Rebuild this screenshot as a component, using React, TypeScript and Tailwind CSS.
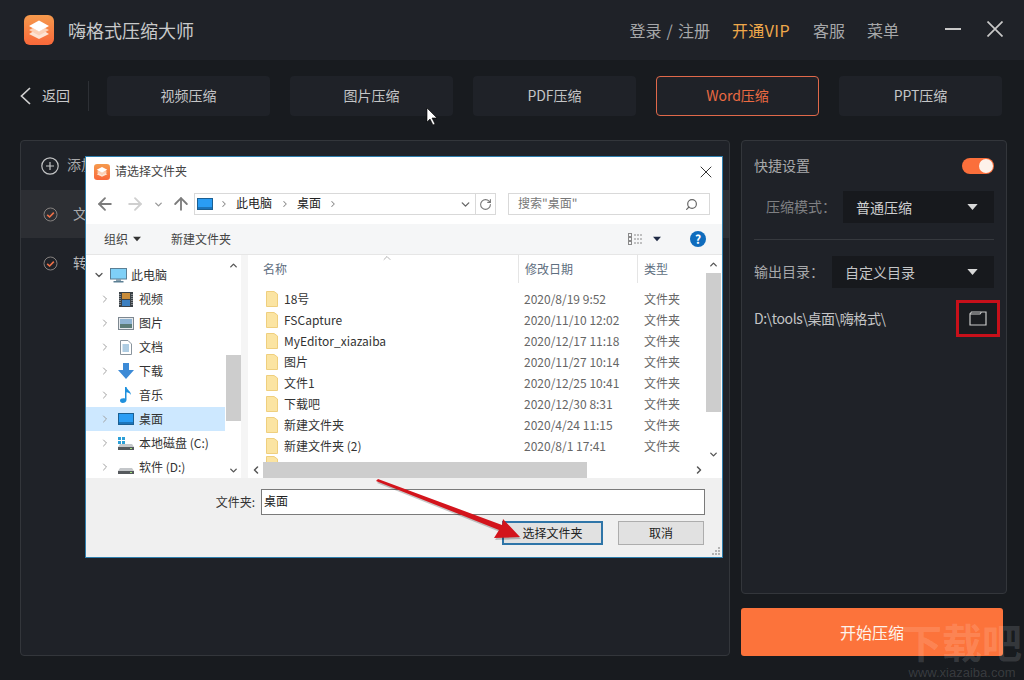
import { ChevronDown, ChevronLeft, ChevronRight, ChevronUp, ArrowLeft, ArrowRight, ArrowUp, RotateCw, Search, X } from "lucide-react";

// App logo: orange tile with stacked white layers
function Logo({ size }: { size: number }) {
  return (
    <svg width={size} height={size} viewBox="0 0 30 30">
      <defs>
        <linearGradient id={`lg${size}`} x1="0" y1="0" x2="0" y2="1">
          <stop offset="0" stopColor="#f59a4d" />
          <stop offset="1" stopColor="#f9683a" />
        </linearGradient>
      </defs>
      <rect width="30" height="30" rx="6" fill={`url(#lg${size})`} />
      <path d="M15 24 L25 19 L21 16.5 L15 19.5 L9 16.5 L5 19 Z" fill="#fde3d3" />
      <path d="M15 20.5 L25 15 L21 13 L15 16 L9 13 L5 15 Z" fill="#fcd0b5" />
      <path d="M15 5.5 L25 11 L15 16.5 L5 11 Z" fill="#ffffff" />
    </svg>
  );
}

function CheckCircle() {
  return (
    <svg width="15" height="15" viewBox="0 0 15 15" fill="none">
      <circle cx="7.5" cy="7.5" r="6.5" stroke="#85817f" strokeWidth="1" />
      <path d="M4.2 7.8 L6.6 10 L10.8 5.6" stroke="#ee7148" strokeWidth="1.6" />
    </svg>
  );
}

function Caret({ className }: { className: string }) {
  return (
    <svg width="11" height="6" viewBox="0 0 12 7" className={className}>
      <path d="M0 0 H12 L6 7 Z" fill="currentColor" />
    </svg>
  );
}

function Folder() {
  return (
    <svg width="12" height="16" viewBox="0 0 12 16" className="shrink-0">
      <path d="M0.5 0.5 H8 L11.5 3 V15.5 H0.5 Z" fill="#fbe4a2" stroke="#efcf7e" />
    </svg>
  );
}

function PcIcon() {
  return (
    <svg width="17" height="15" viewBox="0 0 17 15">
      <rect x="0.5" y="0.5" width="16" height="10.5" fill="#7fd0f7" stroke="#5b7f94" />
      <rect x="6" y="11" width="5" height="2" fill="#8aa0ad" />
      <rect x="3.5" y="13" width="10" height="1.5" fill="#5b7f94" />
    </svg>
  );
}

function DesktopIcon({ w = 16, h = 12 }: { w?: number; h?: number }) {
  return (
    <svg width={w} height={h} viewBox="0 0 16 12">
      <rect x="0.5" y="0.5" width="15" height="11" fill="#2a9df4" stroke="#1b5f92" />
      <path d="M1 10 H15" stroke="#0f4d80" />
    </svg>
  );
}

function NavIcon({ kind }: { kind: string }) {
  if (kind === "film")
    return (
      <svg width="14" height="15" viewBox="0 0 14 15">
        <rect width="14" height="15" fill="#3b4146" />
        <rect x="3" y="1" width="8" height="6" fill="#c98c3a" />
        <rect x="3" y="8" width="8" height="6" fill="#3c7fc0" />
        <path d="M1 2 V13 M13 2 V13" stroke="#c8ccd0" strokeWidth="1" strokeDasharray="1 1" />
      </svg>
    );
  if (kind === "pic")
    return (
      <svg width="16" height="13" viewBox="0 0 16 13">
        <rect x="0.5" y="0.5" width="15" height="12" fill="#e6e9ec" stroke="#7d8790" />
        <rect x="2" y="2" width="12" height="5" fill="#8fb4d3" />
        <rect x="2" y="7" width="12" height="4" fill="#5c7d78" />
      </svg>
    );
  if (kind === "doc")
    return (
      <svg width="12" height="15" viewBox="0 0 12 15" fill="none">
        <path d="M0.5 0.5 H8 L11.5 4 V14.5 H0.5 Z" fill="#fff" stroke="#8a959e" />
        <path d="M2.5 5 H9 M2.5 7 H9 M2.5 9 H9 M2.5 11 H9" stroke="#5f9ac6" />
      </svg>
    );
  if (kind === "down")
    return (
      <svg width="16" height="16" viewBox="0 0 16 16">
        <path d="M5 0 H11 V7 H16 L8 16 L0 7 H5 Z" fill="#3c8ad6" />
      </svg>
    );
  if (kind === "music")
    return (
      <svg width="12" height="16" viewBox="0 0 12 16">
        <path d="M5 0 H6.5 C7 3 11 4 11 8 C10 6 8 5.5 6.5 5.2 V13 C6.5 15 4.5 16 2.8 16 C1 16 0 15 0 13.6 C0 12 2 11 5 11.5 Z" fill="#1e90dd" />
      </svg>
    );
  if (kind === "desk") return <DesktopIcon />;
  return (
    <svg width="16" height="13" viewBox="0 0 16 13">
      {kind === "c" && (
        <g fill="#2b9fd8">
          <rect x="0" y="0" width="3" height="3" />
          <rect x="4" y="0" width="3" height="3" />
          <rect x="0" y="4" width="3" height="3" />
          <rect x="4" y="4" width="3" height="3" />
        </g>
      )}
      <path d="M2 7 H14 L16 10 H0 Z" fill="#c4c7ca" />
      <rect x="0" y="10" width="16" height="3" fill="#55595d" />
      <rect x="12" y="11" width="2" height="1" fill="#9fe07a" />
    </svg>
  );
}

const navRows = [
  { label: "视频", kind: "film" },
  { label: "图片", kind: "pic" },
  { label: "文档", kind: "doc" },
  { label: "下载", kind: "down" },
  { label: "音乐", kind: "music" },
  { label: "桌面", kind: "desk" },
  { label: "本地磁盘 (C:)", kind: "c" },
  { label: "软件 (D:)", kind: "d" },
];

const files = [
  ["18号", "2020/8/19 9:52"],
  ["FSCapture", "2020/11/10 12:02"],
  ["MyEditor_xiazaiba", "2020/12/17 11:18"],
  ["图片", "2020/11/27 10:14"],
  ["文件1", "2020/12/25 10:41"],
  ["下载吧", "2020/12/30 8:31"],
  ["新建文件夹", "2020/4/24 11:15"],
  ["新建文件夹 (2)", "2020/8/1 17:41"],
];

const tabs = ["视频压缩", "图片压缩", "PDF压缩", "Word压缩", "PPT压缩"];

function FileDialog() {
  return (
    <div className="absolute left-[85px] top-[156px] w-[638px] h-[402px] bg-white border border-[#2f7fae] flex flex-col text-[12px] text-[#333]">
      {/* Title bar */}
      <div className="h-[30px] flex items-center pl-2 pr-[6px] shrink-0">
        <Logo size={16} />
        <span className="ml-[5px] -mt-[2px] text-[#444]">请选择文件夹</span>
        <X size={20} strokeWidth={1.1} className="ml-auto text-[#222]" />
      </div>
      {/* Address row */}
      <div className="h-[37px] pt-[6px] pl-[11px] flex items-start shrink-0">
        <div className="h-[22px] flex items-center w-[97px]">
          <div className="w-[16px] flex justify-center"><ArrowLeft size={20} strokeWidth={2.2} className="shrink-0 text-[#7c7c7c]" /></div>
          <div className="ml-[14px] w-[16px] flex justify-center"><ArrowRight size={20} strokeWidth={2.2} className="shrink-0 text-[#cfcfcf]" /></div>
          <div className="ml-[7px] w-[16px] flex justify-center"><ChevronDown size={11} strokeWidth={3} className="text-[#999]" /></div>
          <div className="ml-[7px] w-[16px] flex justify-center"><ArrowUp size={20} strokeWidth={2.2} className="shrink-0 text-[#7c7c7c]" /></div>
        </div>
        <div className="w-[302px] h-[22px] border border-[#d9d9d9] flex items-center pl-[2px]">
          <DesktopIcon w={16} h={12} />
          <ChevronRight size={10} strokeWidth={2.5} className="ml-[6px] text-[#888]" />
          <span className="ml-[7px] -mt-[2px] text-[#222]">此电脑</span>
          <ChevronRight size={10} strokeWidth={2.5} className="ml-[8px] text-[#888]" />
          <span className="ml-[7px] -mt-[2px] text-[#222]">桌面</span>
          <ChevronRight size={10} strokeWidth={2.5} className="ml-[7px] text-[#888]" />
          <ChevronDown size={13} strokeWidth={2.5} className="ml-auto mr-[3px] text-[#666]" />
          <div className="w-[20px] h-[20px] border-l border-[#d9d9d9] flex items-center justify-center">
            <RotateCw size={13} strokeWidth={2} className="text-[#777]" />
          </div>
        </div>
        <div className="ml-[12px] w-[202px] h-[22px] border border-[#d9d9d9] flex items-center pl-[9px] pr-[11px] text-[#777]">
          <span className="-mt-[2px]">搜索"桌面"</span>
          <Search size={13} strokeWidth={2.2} className="ml-auto text-[#666] -scale-x-100" />
        </div>
      </div>
      {/* Toolbar */}
      <div className="h-[31px] bg-[#f5f6f7] border-b border-[#e6e6e6] flex items-center pl-[18px] pr-[16px] shrink-0 text-[#444]">
        <span>组织</span>
        <Caret className="ml-[5px] w-[8px] text-[#333]" />
        <span className="ml-[30px]">新建文件夹</span>
        <svg width="16" height="12" viewBox="0 0 16 12" className="ml-auto" fill="none" stroke="#8a8a8a">
          <rect x="0.5" y="0.5" width="3" height="3" />
          <rect x="0.5" y="4.5" width="3" height="3" />
          <rect x="0.5" y="8.5" width="3" height="3" />
          <path d="M6 2 H15 M6 6 H15 M6 10 H15" strokeDasharray="2 1" />
        </svg>
        <Caret className="ml-[9px] w-[8px] text-[#1f2a44]" />
        <div className="ml-[29px] w-[16px] h-[16px] rounded-full bg-[#0f6cbd] flex items-center justify-center text-white text-[12px] font-bold leading-none">?</div>
      </div>
      {/* Panes */}
      <div className="h-[223px] flex shrink-0 bg-[#f5f5f5]">
        {/* Navigation tree */}
        <div className="w-[155px] flex bg-white overflow-hidden">
          <div className="w-[139px] pt-[8px] overflow-hidden">
            <div className="h-[24px] flex items-center pl-[7px]">
              <ChevronDown size={12} strokeWidth={2.5} className="text-[#555]" />
              <span className="ml-[5px]"><PcIcon /></span>
              <span className="ml-[4px] -mt-[1px]">此电脑</span>
            </div>
            {navRows.map((r) => (
              <div key={r.label} className={`h-[24px] flex items-center pl-[13px] ${r.kind === "desk" ? "bg-[#cde8ff]" : ""}`}>
                <ChevronRight size={12} strokeWidth={2} className="text-[#a0a0a0] shrink-0" />
                <span className="w-[20px] ml-[5px] flex justify-center shrink-0"><NavIcon kind={r.kind} /></span>
                <span className="ml-[3px] -mt-[1px] whitespace-nowrap">{r.label}</span>
              </div>
            ))}
          </div>
          <div className="w-[16px] flex flex-col items-center bg-white">
            <ChevronUp size={11} strokeWidth={3} className="mt-[5px] text-[#555]" />
            <div className="mt-[84px] w-[15px] ml-[1px] h-[66px] bg-[#cdcdcd]" />
            <ChevronDown size={11} strokeWidth={3} className="mt-auto mb-[2px] text-[#555]" />
          </div>
        </div>
        {/* File list */}
        <div className="ml-[7px] flex-1 flex flex-col min-w-0 bg-white">
          <div className="h-[207px] flex">
            <div className="w-[458px] overflow-hidden">
              <div className="h-[33px]">
                <div className="h-[28px] flex items-center text-[#5e6e80] relative">
                  <div className="w-[270px] pl-[15px]">名称</div>
                  <div className="w-[119px] h-full flex items-center pl-[6px] border-l border-[#e5e5e5]">修改日期</div>
                  <div className="flex-1 h-full flex items-center pl-[6px] border-l border-[#e5e5e5]">类型</div>
                  <ChevronUp size={12} strokeWidth={1.5} className="absolute left-[133px] top-[-3px] text-[#999]" />
                </div>
              </div>
              {files.map(([name, date]) => (
                <div key={name} className="h-[21px] flex items-center">
                  <div className="w-[276px] pl-[18px] flex items-center gap-[6px]">
                    <Folder />
                    <span className="text-[#333] whitespace-nowrap">{name}</span>
                  </div>
                  <div className="w-[120px] text-[#666] whitespace-nowrap">{date}</div>
                  <div className="text-[#666]">文件夹</div>
                </div>
              ))}
              <div className="h-[21px] pl-[18px]"><Folder /></div>
            </div>
            <div className="w-[15px] flex flex-col items-center">
              <ChevronUp size={11} strokeWidth={3} className="mt-[4px] text-[#555]" />
              <div className="mt-[3px] w-full h-[139px] bg-[#cdcdcd]" />
              <ChevronDown size={11} strokeWidth={3} className="mt-auto mb-[2px] text-[#555]" />
            </div>
          </div>
          <div className="h-[16px] flex items-center w-[458px] bg-white">
            <ChevronLeft size={12} strokeWidth={3} className="ml-[2px] text-[#555] shrink-0" />
            <div className="w-[324px] h-full bg-[#cdcdcd] ml-[1px]" />
            <ChevronRight size={12} strokeWidth={3} className="ml-auto mr-[1px] text-[#555]" />
          </div>
        </div>
      </div>
      {/* Footer */}
      <div className="flex-1 bg-[#f0f0f0] relative">
        <div className="flex items-center pt-[11px]">
          <span className="w-[169px] text-right text-[#333] -mt-[1px]">文件夹:</span>
          <div className="ml-[6px] w-[444px] h-[26px] border border-[#7a7a7a] bg-white flex items-center pl-[2px] pb-[3px] text-[#222]">桌面</div>
        </div>
        <div className="flex pt-[6px] pl-[416px]">
          <div className="w-[101px] h-[24px] border-2 border-[#2f75a8] bg-[#e1e1e1] flex items-center justify-center text-[#222]">选择文件夹</div>
          <div className="ml-[15px] w-[86px] h-[24px] border border-[#adadad] bg-[#e1e1e1] flex items-center justify-center text-[#222]">取消</div>
        </div>
        <svg width="10" height="10" viewBox="0 0 10 10" className="absolute right-[1px] bottom-[1px]" fill="#b4b4b4">
          <rect x="7" y="1" width="2" height="2" />
          <rect x="4" y="4" width="2" height="2" />
          <rect x="7" y="4" width="2" height="2" />
          <rect x="1" y="7" width="2" height="2" />
          <rect x="4" y="7" width="2" height="2" />
          <rect x="7" y="7" width="2" height="2" />
        </svg>
      </div>
    </div>
  );
}

export default function App() {
  return (
    <div className="relative w-[1024px] h-[680px] overflow-hidden bg-[#181b1f] flex flex-col font-['Noto_Sans_CJK_SC',sans-serif]">
      {/* Header */}
      <header className="h-[60px] shrink-0 bg-[#1f2228] flex items-center pl-[24px] pr-[21px] text-[#a6a7a9]">
        <Logo size={30} />
        <span className="ml-[14px] text-[18px] text-[#c9cacb]">嗨格式压缩大师</span>
        <span className="ml-auto text-[16px] [word-spacing:1.5px]">登录 / 注册</span>
        <span className="ml-[22px] text-[16px] tracking-[0.4px] text-[#efa94b]">开通VIP</span>
        <span className="ml-[23px] text-[16px]">客服</span>
        <span className="ml-[22px] text-[16px]">菜单</span>
        <div className="ml-[46px] w-[16px] h-[2px] bg-[#c8c8c8] -mt-[2px]" />
        <svg width="16" height="16" viewBox="0 0 16 16" className="ml-[26px] -mt-[2px] text-[#c8c8c8]" stroke="currentColor" strokeWidth="1.7">
          <path d="M0.5 0.5 L15.5 15.5 M15.5 0.5 L0.5 15.5" />
        </svg>
      </header>

      {/* Tabs */}
      <div className="mt-[16px] h-[40px] shrink-0 flex items-center pl-[20px]">
        <svg width="11" height="18" viewBox="0 0 11 18" fill="none" stroke="#d0d0d0" strokeWidth="1.7">
          <path d="M10 1 L1.5 9 L10 17" />
        </svg>
        <span className="ml-[11px] pb-[2px] text-[14px] text-[#c8c9ca]">返回</span>
        <div className="ml-[18px] w-px h-[30px] bg-[#2d3035]" />
        <div className="ml-[18px] flex gap-[20px]">
          {tabs.map((t) => (
            <div
              key={t}
              className={`w-[163px] h-[40px] pb-[2px] rounded-[4px] flex items-center justify-center text-[14px] bg-[#1f2228] ${
                t === "Word压缩" ? "border border-[#e0694a] text-[#ec6a42]" : "text-[#c4c5c7]"
              }`}
            >
              {t}
            </div>
          ))}
        </div>
      </div>

      {/* Main */}
      <div className="mt-[24px] pl-[20px] flex">
        <div className="w-[710px] h-[516px] rounded-[4px] border border-[#33363b] bg-[#1f2228] text-[14px] text-[#a8a9ab]">
          <div className="h-[49px] flex items-center pl-[20px]">
            <svg width="18" height="18" viewBox="0 0 18 18" fill="none" stroke="#c4c5c6" strokeWidth="1.2">
              <circle cx="9" cy="9" r="8.2" />
              <path d="M9 5 V13 M5 9 H13" />
            </svg>
            <span className="ml-[8px] -mt-[2px]">添加文件</span>
          </div>
          <div className="h-[48px] bg-[#2c2e33] flex items-center pl-[22px]">
            <CheckCircle />
            <span className="ml-[15px] -mt-[2px]">文件</span>
          </div>
          <div className="h-[50px] flex items-center pl-[22px]">
            <CheckCircle />
            <span className="ml-[15px] -mt-[2px] text-[#b8b9bb]">转换</span>
          </div>
        </div>

        <div className="ml-[11px] flex flex-col">
          <div className="w-[266px] h-[454px] rounded-[4px] border border-[#33363b] bg-[#1f2228] pl-[12px] pr-[12px] text-[14px] text-[#a8a9ab]">
            <div className="h-[50px] flex items-center">
              <span className="-mt-[2px]">快捷设置</span>
              <div className="ml-auto w-[32px] h-[16px] rounded-full bg-[#fb6f3b] flex items-center justify-end pr-[1px]">
                <div className="w-[14px] h-[14px] rounded-full bg-[#fdf2ea]" />
              </div>
            </div>
            <div className="flex items-center">
              <span className="ml-[12px] -mt-[2px] text-[#7f8083]">压缩模式：</span>
              <div className="ml-auto w-[151px] h-[32px] bg-[#17191d] flex items-center pl-[13px] pr-[16px] text-[#cfd0d1]">
                普通压缩
                <Caret className="ml-auto text-[#d8d8d8]" />
              </div>
            </div>
            <div className="mt-[16px] h-px bg-[#36393e]" />
            <div className="mt-[16px] flex items-center">
              <span className="-mt-[2px]">输出目录：</span>
              <div className="ml-auto w-[162px] h-[32px] bg-[#17191d] flex items-center pl-[13px] pr-[16px] text-[#c4c5c6]">
                自定义目录
                <Caret className="ml-auto text-[#d8d8d8]" />
              </div>
            </div>
            <div className="mt-[12px] flex items-center text-[#c4c5c6]">
              <span className="tracking-[-0.4px]">D:\tools\桌面\嗨格式\</span>
              <div className="ml-auto -mr-[6px] w-[44px] h-[37px] border-[3px] border-[#c8101a] bg-[#1a1c20] flex items-center justify-center">
                <svg width="18" height="15" viewBox="0 0 18 15" fill="none" stroke="#c9c9c9" strokeWidth="1.2">
                  <path d="M1 14 V3 H11 L12.5 1 H17 V14 Z" />
                  <path d="M1 3 L2.5 1 H12" />
                </svg>
              </div>
            </div>
          </div>
          <div className="mt-[14px] w-[262px] h-[48px] rounded-[3px] bg-[#fc733b] flex items-center justify-center text-[16px] text-[#fdf3ec]">
            开始压缩
          </div>
        </div>
      </div>

      <FileDialog />

      {/* Annotation arrow over the dialog */}
      <svg width="1024" height="680" viewBox="0 0 1024 680" className="absolute left-0 top-0 pointer-events-none">
        <polygon points="376,481 378,479 502,525 503,519 520,537 494,538 499,530" fill="#000" opacity="0.22" transform="translate(1 2)" />
        <polygon points="376,481 378,479 502,525 503,519 520,537 494,538 499,530" fill="#d3141c" />
        <polygon points="427,108 427,122 430,119 433,125 435,124 432,118 437,118" fill="#fff" stroke="#000" strokeWidth="0.6" />
      </svg>

      {/* Site watermark */}
      <div className="absolute left-[900px] top-[617px] w-[124px] flex flex-col items-center text-white/15 pointer-events-none">
        <span className="text-[40px] font-bold leading-[48px] whitespace-nowrap">下载吧</span>
        <span className="text-[13px] leading-[15px] whitespace-nowrap font-['Liberation_Sans',sans-serif]">www.xiazaiba.com</span>
      </div>
    </div>
  );
}
